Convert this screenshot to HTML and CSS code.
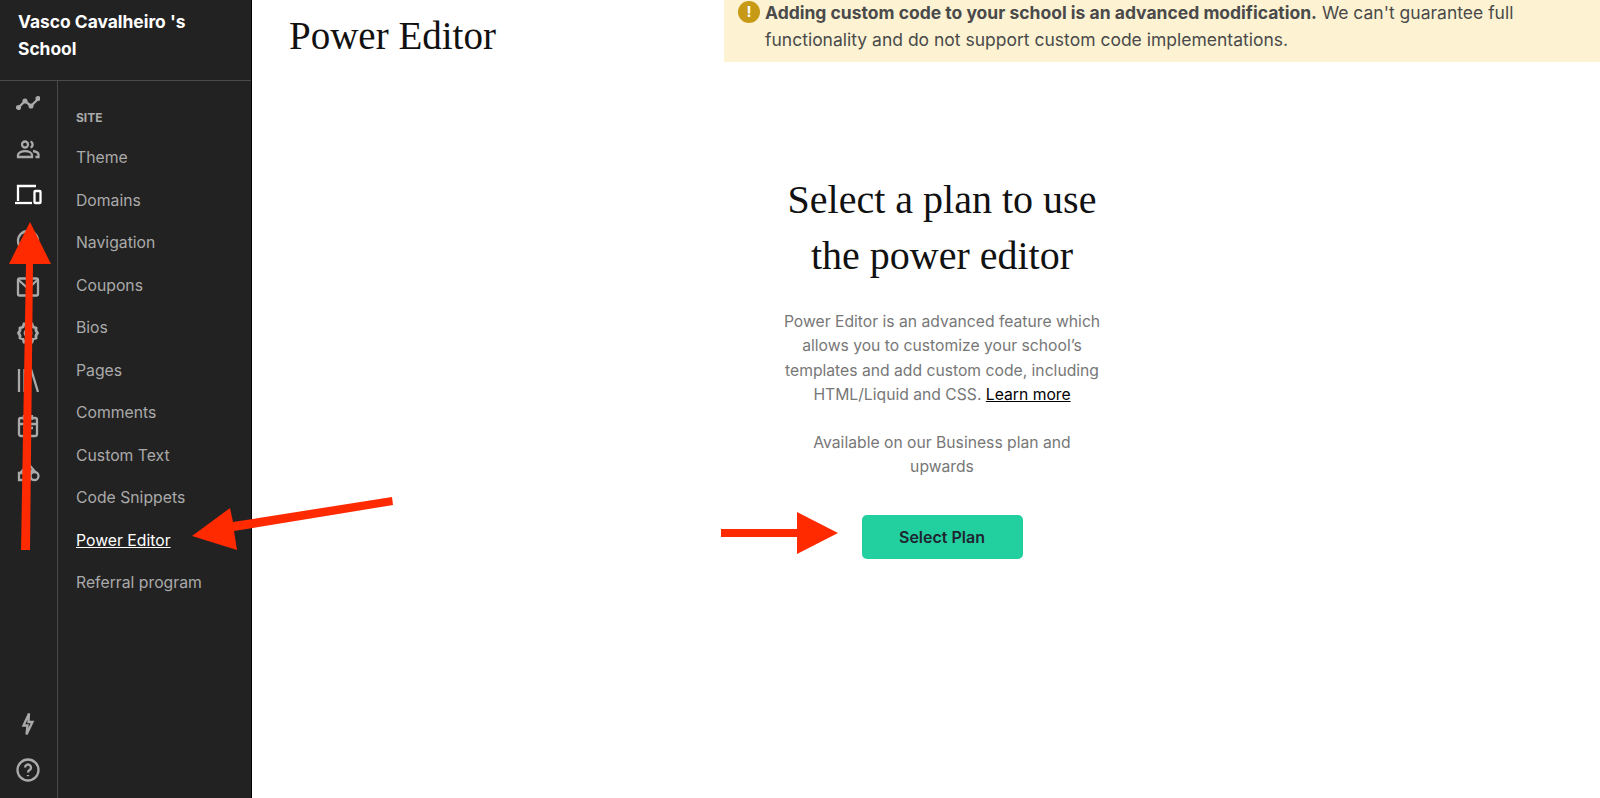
FILE: index.html
```html
<!DOCTYPE html>
<html lang="en">
<head>
    <meta charset="UTF-8">
    <meta name="viewport" content="width=device-width, initial-scale=1.0">
    <title>Power Editor</title>
    <link rel="stylesheet" href="styles.css">
</head>
<body>
    <aside class="sidebar">
        <div class="school-name">Vasco Cavalheiro 's School</div>
        <div class="sidebar-body">
            <nav class="icon-rail">
                <svg class="rail-icon" viewBox="0 0 24 24"><path d="M2 17l7-7 6 5 8-8"/><circle cx="2.500" cy="16.500" r="1.400"/><circle cx="9" cy="10" r="1.400"/><circle cx="15" cy="15" r="1.400"/><circle cx="22" cy="7.500" r="1.400"/></svg>
                <svg class="rail-icon" viewBox="0 0 24 24"><circle cx="9" cy="7.500" r="3"/><path d="M2 20v-2c0-2.500 3.500-3.800 7-3.800s7 1.300 7 3.800v2z"/><path d="M14.500 4.500a3.200 3.200 0 0 1 0 6M17 14c3 .5 5.500 1.700 5.500 3.700V20h-3"/></svg>
                <svg class="rail-icon active" viewBox="0 0 28 24"><path d="M4 18V3h18"/><path d="M1 20h17"/><rect x="20.500" y="8" width="6" height="12" rx=".8"/></svg>
                <svg class="rail-icon" viewBox="0 0 24 24"><circle cx="12" cy="12" r="10"/></svg>
                <svg class="rail-icon" viewBox="0 0 24 24"><rect x="2" y="3.500" width="20" height="17" rx="1.500"/><path d="M2 4.500l10 9 10-9"/></svg>
                <svg class="rail-icon gear" viewBox="0 0 24 24"><path d="M8 3h2.500L12 4.500 13.500 3H16l1 3 3 1v2.500L21.500 12 20 14.500V17l-3 1-1 3h-2.500L12 19.500 10.500 21H8l-1-3-3-1v-2.500L2.500 12 4 9.500V7l3-1z"/><circle cx="12" cy="12" r="3"/></svg>
                <svg class="rail-icon" viewBox="0 0 24 24"><path d="M3 1v23M8.500 1v23M15 1l7 23"/></svg>
                <svg class="rail-icon" viewBox="0 0 24 24"><rect x="3" y="4" width="18" height="18" rx="2"/><path d="M8 1v5M16 1v5M3 10h18M7 14h4M13 14h4M7 18h4"/></svg>
                <svg class="rail-icon" viewBox="0 0 24 24"><path d="M3 13h11v7H3z"/><circle cx="18.500" cy="16" r="4"/><path d="M12.500 4l6 7H6z"/></svg>
                <div class="rail-spacer"></div>
                <svg class="rail-icon" viewBox="0 0 24 24"><path d="M13 1.500L7.500 13.500h4L10.500 22.500l6-12.500h-4z"/></svg>
                <svg class="rail-icon" viewBox="0 0 24 24"><circle cx="12" cy="12" r="10.500"/><path d="M9 9.500a3 3 0 1 1 4.500 2.600c-1 .6-1.500 1.200-1.500 2.400"/><path d="M12 17v1.200"/></svg>
            </nav>
            <nav class="site-menu">
                <div class="menu-title">SITE</div>
                <a class="menu-link" href="#">Theme</a>
                <a class="menu-link" href="#">Domains</a>
                <a class="menu-link" href="#">Navigation</a>
                <a class="menu-link" href="#">Coupons</a>
                <a class="menu-link" href="#">Bios</a>
                <a class="menu-link" href="#">Pages</a>
                <a class="menu-link" href="#">Comments</a>
                <a class="menu-link" href="#">Custom Text</a>
                <a class="menu-link" href="#">Code Snippets</a>
                <a class="menu-link current" href="#">Power Editor</a>
                <a class="menu-link" href="#">Referral program</a>
            </nav>
        </div>
    </aside>

    <main class="content">
        <header class="page-header">
            <h1>Power Editor</h1>
            <div class="notice">
                <span class="notice-icon">!</span>
                <p><strong>Adding custom code to your school is an advanced modification.</strong> We can't guarantee full functionality and do not support custom code implementations.</p>
            </div>
        </header>

        <section class="plan">
            <h2>Select a plan to use the power editor</h2>
            <p>Power Editor is an advanced feature which allows you to customize your school’s templates and add custom code, including HTML/Liquid and CSS. <a href="#">Learn more</a></p>
            <p>Available on our Business plan and upwards</p>
            <button class="select-btn">Select Plan</button>
        </section>
    </main>

    <!-- red annotation arrows drawn over the screenshot -->
    <svg class="annotations" viewBox="0 0 1600 798">
        <path d="M21 550L26 264H9L30 222L51 264H33L30 550z"/>
        <path d="M392 497L233 522L230 508L192 536L237 550L234 531L393 505z"/>
        <path d="M721 529H797V512L838 533L797 554V537H721z"/>
    </svg>
</body>
</html>
```

FILE: styles.css
```css
* {
    margin: 0;
    padding: 0;
    box-sizing: border-box;
}

body {
    display: flex;
    height: 798px;
    overflow: hidden;
    font-family: Inter, 'Noto Sans', sans-serif;
    color: #111;
    background: #fff;
}

.sidebar {
    width: 252px;
    flex-shrink: 0;
    display: flex;
    flex-direction: column;
    background: #222;
    border-right: 1px solid #000;
}

.school-name {
    height: 81px;
    padding: 8px 50px 0 18px;
    font-size: 17.4px;
    font-weight: 700;
    line-height: 27px;
    color: #fff;
    border-bottom: 1px solid #4a4a4a;
}

.sidebar-body {
    flex: 1;
    display: flex;
    min-height: 0;
}

.icon-rail {
    width: 58px;
    display: flex;
    flex-direction: column;
    align-items: center;
    gap: 22.1px;
    padding: 10px 2px 16px 0;
    border-right: 1px solid #4a4a4a;
}

.rail-icon {
    width: 24px;
    height: 24px;
    flex-shrink: 0;
    fill: none;
    stroke: #aaa;
    stroke-width: 2.3;
}

.rail-icon.active {
    width: 28px;
    stroke: #fff;
}

.rail-icon.gear {
    stroke-width: 2.8;
}

.rail-spacer {
    flex: 1;
}

.site-menu {
    display: flex;
    flex-direction: column;
    padding: 29px 0 0 18px;
}

.menu-title {
    margin-bottom: 20px;
    font-size: 12px;
    font-weight: 700;
    line-height: 16px;
    color: #aaa;
}

.menu-link {
    height: 42.5px;
    font-size: 15.75px;
    line-height: 24px;
    color: #aaa;
    text-decoration: none;
}

.menu-link.current {
    color: #fff;
    text-decoration: underline;
}

.content {
    flex: 1;
    min-width: 0;
}

.page-header {
    display: flex;
    align-items: flex-start;
    justify-content: space-between;
}

h1 {
    padding: 11px 0 0 37px;
    font-family: 'Liberation Serif', serif;
    font-size: 39px;
    font-weight: 400;
    line-height: 50px;
}

.notice {
    width: 876px;
    height: 62px;
    display: flex;
    gap: 5px;
    padding: 0 60px 0 14px;
    background: #fdf3d3;
    font-size: 17.5px;
    line-height: 27px;
    color: #4a4a4a;
}

.notice p {
    margin-top: -1px;
}

.notice-icon {
    width: 22px;
    height: 22px;
    margin-top: 1px;
    flex-shrink: 0;
    border-radius: 50%;
    background: #c79a16;
    color: #fff;
    font-size: 15px;
    font-weight: 700;
    line-height: 22px;
    text-align: center;
}

.plan {
    width: 320px;
    margin: 110px 0 0 530px;
    text-align: center;
    font-size: 15.7px;
    line-height: 24.3px;
    color: #777;
}

.plan h2 {
    margin-bottom: 26px;
    font-family: 'Liberation Serif', serif;
    font-size: 40px;
    font-weight: 400;
    line-height: 56px;
    color: #111;
}

.plan p {
    margin-bottom: 24px;
}

.plan a {
    color: #000;
}

.select-btn {
    width: 161px;
    height: 44px;
    margin-top: 11px;
    border: none;
    border-radius: 5px;
    background: #22d09f;
    color: #1f2430;
    font-family: inherit;
    font-size: 16px;
    font-weight: 600;
}

.annotations {
    position: absolute;
    left: 0;
    top: 0;
    width: 1600px;
    height: 798px;
    fill: #ff2a00;
    pointer-events: none;
}
```
